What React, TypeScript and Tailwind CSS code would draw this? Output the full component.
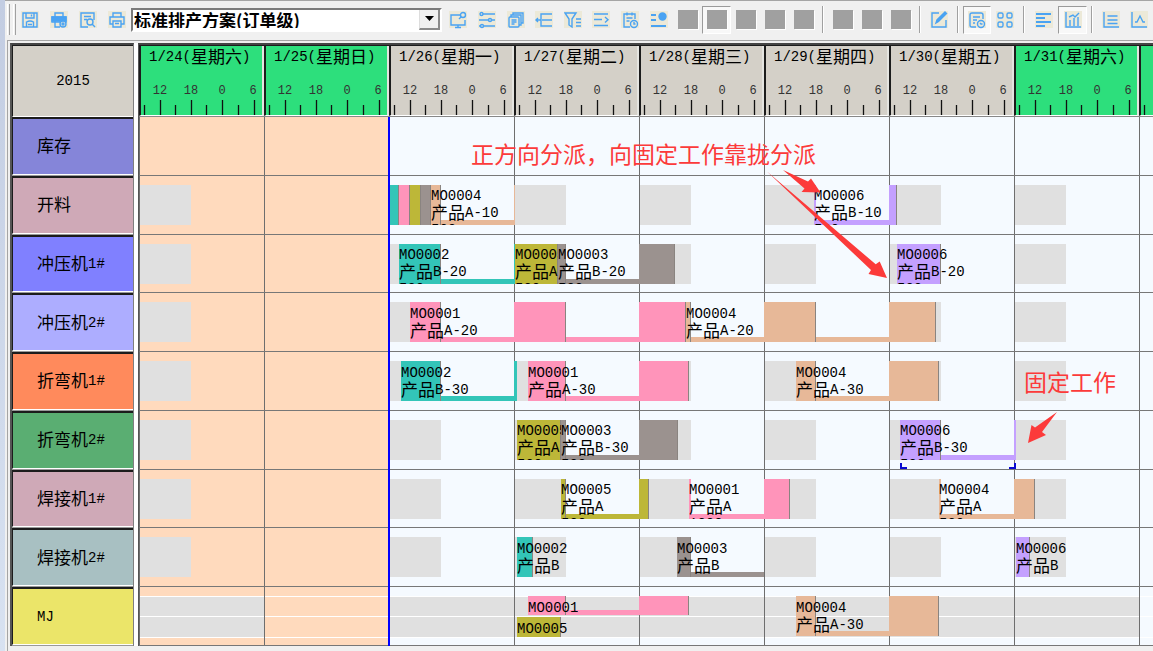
import { type ReactNode } from 'react'

const MONO = "font-['Liberation_Mono','Noto_Sans_CJK_SC',monospace]"
const SANS = "font-['Noto_Sans_CJK_SC',sans-serif]"

const DAY = 125
const WORK_START = 1
const WORK_WIDTH = 51

const days = [
  { label: '1/24(星期六)', off: true },
  { label: '1/25(星期日)', off: true },
  { label: '1/26(星期一)', off: false },
  { label: '1/27(星期二)', off: false },
  { label: '1/28(星期三)', off: false },
  { label: '1/29(星期四)', off: false },
  { label: '1/30(星期五)', off: false },
  { label: '1/31(星期六)', off: true },
  { label: '', off: true },
]

type Job = {
  color: string
  blocks: [number, number][]
  strip?: [number, number]
  lines?: string[]
  clip?: boolean
  top?: number
  height?: number
  fixed?: boolean
}

type Row = { name: string; bg: string; kind: 'plain' | 'work' | 'pool'; jobs: Job[] }

const TEAL = 'bg-[#33c5b8]'
const PINK = 'bg-[#ff94ba]'
const OLIVE = 'bg-[#bdb738]'
const GRAY = 'bg-[#9b928f]'
const PEACH = 'bg-[#e7b898]'
const PURPLE = 'bg-[#c4a0ff]'

const rows: Row[] = [
  { name: '库存', bg: 'bg-[#8585d9]', kind: 'plain', jobs: [] },
  {
    name: '开料', bg: 'bg-[#cfa9b7]', kind: 'work', jobs: [
      { color: TEAL, blocks: [[251, 260]] },
      { color: PINK, blocks: [[260, 271]] },
      { color: OLIVE, blocks: [[271, 282]] },
      { color: GRAY, blocks: [[282, 292]] },
      { color: PEACH, blocks: [[292, 302], [375, 376]], strip: [292, 376], lines: ['MO0004', '产品A-10', '500'] },
      { color: PURPLE, blocks: [[675, 677], [750, 758]], strip: [675, 758], lines: ['MO0006', '产品B-10', '500'] },
    ],
  },
  {
    name: '冲压机1#', bg: 'bg-[#8080ff]', kind: 'work', jobs: [
      { color: TEAL, blocks: [[260, 302], [375, 376]], strip: [260, 376], lines: ['MO0002', '产品B-20', '500'] },
      { color: OLIVE, blocks: [[376, 419]], lines: ['MO0005', '产品A-10', '500'], clip: true },
      { color: GRAY, blocks: [[419, 427], [500, 536]], strip: [419, 536], lines: ['MO0003', '产品B-20', '500'] },
      { color: PURPLE, blocks: [[758, 802]], lines: ['MO0006', '产品B-20', '500'] },
    ],
  },
  {
    name: '冲压机2#', bg: 'bg-[#adadff]', kind: 'work', jobs: [
      { color: PINK, blocks: [[271, 302], [375, 427], [500, 547]], strip: [271, 547], lines: ['MO0001', '产品A-20', '1000'] },
      { color: PEACH, blocks: [[547, 552], [625, 677], [750, 797]], strip: [547, 797], lines: ['MO0004', '产品A-20', '500'] },
    ],
  },
  {
    name: '折弯机1#', bg: 'bg-[#ff8a5c]', kind: 'work', jobs: [
      { color: TEAL, blocks: [[262, 302], [375, 378]], strip: [262, 378], lines: ['MO0002', '产品B-30', '500'] },
      { color: PINK, blocks: [[389, 427], [500, 550]], strip: [389, 550], lines: ['MO0001', '产品A-30', '1000'] },
      { color: PEACH, blocks: [[657, 677], [750, 800]], strip: [657, 800], lines: ['MO0004', '产品A-30', '500'] },
    ],
  },
  {
    name: '折弯机2#', bg: 'bg-[#5aae72]', kind: 'work', jobs: [
      { color: OLIVE, blocks: [[378, 422]], lines: ['MO0005', '产品A-10', '500'], clip: true },
      { color: GRAY, blocks: [[422, 427], [500, 539]], strip: [422, 539], lines: ['MO0003', '产品B-30', '500'] },
      { color: PURPLE, blocks: [[761, 802], [875, 877]], strip: [761, 877], lines: ['MO0006', '产品B-30', '500'], fixed: true },
    ],
  },
  {
    name: '焊接机1#', bg: 'bg-[#cfa9b7]', kind: 'work', jobs: [
      { color: OLIVE, blocks: [[422, 427], [500, 510]], strip: [422, 510], lines: ['MO0005', '产品A', '500'] },
      { color: PINK, blocks: [[550, 552], [625, 651]], strip: [550, 651], lines: ['MO0001', '产品A', '1000'] },
      { color: PEACH, blocks: [[800, 802], [875, 896]], strip: [800, 896], lines: ['MO0004', '产品A', '500'] },
    ],
  },
  {
    name: '焊接机2#', bg: 'bg-[#a8c0c2]', kind: 'work', jobs: [
      { color: TEAL, blocks: [[378, 394]], lines: ['MO0002', '产品B', '500'] },
      { color: GRAY, blocks: [[538, 552]], strip: [538, 625], lines: ['MO0003', '产品B', '500'] },
      { color: PURPLE, blocks: [[877, 891]], lines: ['MO0006', '产品B', '500'] },
    ],
  },
  {
    name: 'MJ', bg: 'bg-[#ebe569]', kind: 'pool', jobs: [
      { color: PINK, blocks: [[389, 427], [500, 550]], strip: [389, 550], lines: ['MO0001'], height: 19 },
      { color: OLIVE, blocks: [[378, 422]], lines: ['MO0005'], top: 30, height: 20 },
      { color: PEACH, blocks: [[657, 677], [750, 800]], strip: [657, 800], lines: ['MO0004', '产品A-30', '500'] },
    ],
  },
]

/** Latin text in the fixed-width face, Chinese characters one size up. */
function Mixed({ text }: { text: string }) {
  const parts = text.split(/([\u4e00-\u9fff]+)/).filter(Boolean)
  return (
    <span className="inline-flex items-center whitespace-nowrap leading-none">
      {parts.map((p, i) =>
        /[\u4e00-\u9fff]/.test(p) ? (
          <span key={i} className="pb-[3px] font-['Noto_Sans_CJK_SC',sans-serif] text-[17px] leading-none">{p}</span>
        ) : (
          <span key={i}>{p}</span>
        ),
      )}
    </span>
  )
}

function JobBar({ job }: { job: Job }) {
  const top = job.top ?? 9
  const height = job.height ?? 40
  const left = job.blocks[0][0]
  return (
    <div className="absolute" style={{ left, top, height }}>
      {job.strip && (
        <div className={`absolute bottom-0 h-[5px] ${job.color}`} style={{ left: 0, width: job.strip[1] - job.strip[0] }} />
      )}
      {job.blocks.map(([a, b]) => (
        <div
          key={a}
          className={`absolute inset-y-0 ${job.color} ${b - a > 3 ? 'border-r border-[#8a8480]' : ''}`}
          style={{ left: a - left, width: b - a }}
        />
      ))}
      {job.lines && (
        <div
          className={`relative h-full overflow-hidden whitespace-nowrap pt-[3px] text-sm text-black ${MONO}`}
          style={job.clip ? { width: job.blocks[0][1] - left } : undefined}
        >
          {job.lines.map((l) => (
            <div key={l} className="flex h-[17px] items-center"><Mixed text={l} /></div>
          ))}
        </div>
      )}
      {job.fixed && job.strip && (
        <div
          className="absolute -bottom-[9px] left-0 flex h-[6px] justify-between"
          style={{ width: job.strip[1] - job.strip[0] }}
        >
          <span className="w-[7px] border-b-2 border-l-2 border-[#0a0ad0]" />
          <span className="w-[7px] border-b-2 border-r-2 border-[#0a0ad0]" />
        </div>
      )}
    </div>
  )
}

function DayHeader({ label, off }: { label: string; off: boolean }) {
  return (
    <div className={`flex w-[125px] shrink-0 flex-col overflow-hidden border-b border-l-2 border-r-2 border-b-white border-l-[#1c1c1c] border-r-[#e4e4e0] ${off ? 'bg-[#2ddf7c]' : 'bg-[#d4d0c8]'}`}>
      <div className={`flex h-[21px] items-center whitespace-nowrap pl-2 text-sm text-black ${MONO}`}>
        <Mixed text={label} />
      </div>
      <div className={`mt-[18px] grid grid-cols-[repeat(4,30px)] gap-x-px text-center text-xs leading-3 text-[#333] ${MONO}`}>
        {[12, 18, 0, 6].map((h) => <span key={h} className="pl-2">{label && h}</span>)}
      </div>
      <svg className="mt-auto h-[15px] w-[121px] shrink-0" viewBox="0 0 121 15" stroke="#111" strokeWidth="1.3" aria-hidden="true">
        <path d="M3.5 5V15M34.5 5V15M65.5 5V15M97.5 5V15M19.5 0V15M50.5 0V15M81.5 0V15M113.5 0V15" />
      </svg>
    </div>
  )
}

function TimelineRow({ row }: { row: Row }) {
  return (
    <div className="relative flex overflow-hidden border-b border-[#777] shadow-[0_1px_0_#7777]">
      {days.map((d, i) => {
        const hasWork = i !== 1 && i !== 8
        return (
          <div
            key={i}
            className={`flex w-[125px] shrink-0 flex-col border-l border-[#6e6e6e] pt-[9px] ${i < 2 ? 'bg-[#ffdabd]' : 'bg-[#f5faff]'}`}
          >
            {row.kind === 'work' && hasWork && (
              <div className="h-10 bg-[#e0e0e0]" style={{ width: WORK_WIDTH }} />
            )}
            {row.kind === 'pool' && (
              <div className={`flex h-[42px] flex-col border-y border-white ${hasWork ? 'bg-[#e0e0e0]' : ''}`}>
                <div className="h-5 border-b border-white" />
              </div>
            )}
          </div>
        )
      })}
      {row.jobs.map((j, i) => <JobBar key={i} job={j} />)}
    </div>
  )
}

const icons: Record<string, ReactNode> = {
  save: <path d="M2 2h14v14H2zM5 2v5h8V2M10.500 3.500v2M5.500 16v-5q3.500-2 7 0v5M7 13.500h4" />,
  printSet: (
    <>
      <path d="M5 6V2h8v4M2 6h14v5H2z" />
      <path d="M2 6h14v4H2z" fill="currentColor" />
      <path d="M5 9v7h5" />
      <circle cx="13" cy="13" r="3" fill="#ece9d8" />
      <circle cx="13" cy="13" r="1" />
    </>
  ),
  preview: <><path d="M9 16H2V2h13v7M5 5.500h7M5 8.500h3" /><circle cx="11" cy="11" r="3" /><path d="m13 13 3 3" /></>,
  print: <path d="M5 6V2h8v4M5 13H2V6h14v7h-3M5 10h8v6H5zM7 12.500h4" />,
  board: <><path d="M11 4H2v10h14V9M6 16.500h6M9 14v2" /><circle cx="14" cy="4" r="2.500" /><path d="m12 6-2 2" /></>,
  sliders: <><path d="M5 3h12M1 9h10M14 9h3M6 15h11M1 15h1" /><circle cx="3.500" cy="3" r="1.500" /><circle cx="12" cy="9" r="1.500" /><circle cx="4" cy="15" r="1.500" /></>,
  copies: <><path d="M6 4V2h10v10h-2M4 6V4h10v10h-2" /><rect x="2" y="6" width="10" height="10" rx="1" /><path d="M4.500 9h5M4.500 11h5M4.500 13h3" /></>,
  tree: <path d="M1 9h5M9 3H6v12h3M9 3h8M7 9h10M9 15h8M3 7 1 9l2 2" />,
  filter: <path d="M1 2h11L8 8v8l-3-2V8zM12 8h5M12 11.500h5M12 15h5" />,
  next: <path d="M2 3h14M2 8.500h8M2 14.500h14M13 6l3 2.700-3 2.800" />,
  clipTime: <><path d="M9 16H3V3h11v5M6 1.500v3M11 1.500v3M5.500 7h6M5.500 10h3" /><circle cx="13" cy="13" r="3.500" /><path d="M13 11v2h1.500" /></>,
  user: <><path d="M1 4h5M1 9h5M1 15h15" strokeWidth="2" /><circle cx="12.500" cy="5.500" r="3.500" fill="currentColor" /></>,
  edit: <><path d="M9 2H2v14h14V9" /><path d="m6 12 1-3 8-8 1.500 1.500-8 8z" fill="currentColor" /></>,
  listTime: <><path d="M8 16H4q-2 0-2-2V4q0-2 2-2h9q2 0 2 2v4M5 6h7M5 9h4M5 12h2" /><circle cx="13" cy="13" r="3.500" /><path d="m12 12 1 1h1.500" /></>,
  modules: <><rect x="2" y="2" width="5" height="5" rx="1.500" /><rect x="11" y="2" width="5" height="5" rx="1.500" /><rect x="2" y="11" width="5" height="5" rx="1.500" /><rect x="11" y="11" width="5" height="5" rx="1.500" /></>,
  align: <path d="M1 3h15M1 7h9M1 11h15M1 15h9" strokeWidth="2" />,
  chart: <path d="M2 1v15h15M6 15V9M10 15V7M14 15V6M5 6l4-2 2 2 4-4" />,
  lines: <path d="M2 1v15h15M5.500 5h10M5.500 9h10M5.500 12.500h10" />,
  curve: <path d="M2 1v15h15M5 11h2l3-6 3 6h2" />,
}

function Tool({ name, label, pressed }: { name: string; label: string; pressed?: boolean }) {
  return (
    <button
      type="button"
      aria-label={label}
      aria-pressed={pressed}
      className={`flex h-7 min-w-0 items-center justify-center ${pressed ? 'border border-b-white border-l-[#9a9a9a] border-r-white border-t-[#9a9a9a] bg-[#f8f8f8]' : ''}`}
    >
      {name === 'blank' ? (
        <span className="h-[19px] w-5 bg-[#a0a0a0] shadow-[1px_1px_0_#fff]" />
      ) : (
        <span className="flex h-[17px] w-[18px] items-center justify-center bg-[#ece9d8] text-[#4aa3f2]">
          <svg className="size-[18px] shrink-0" viewBox="0 0 18 18" fill="none" stroke="currentColor" strokeWidth="1.4" aria-hidden="true">
            {icons[name]}
          </svg>
        </span>
      )}
    </button>
  )
}

function Divider() {
  return <span className="mx-1 h-[27px] w-[2px] shrink-0 border-l border-r border-l-[#a0a0a0] border-r-white" />
}

function Toolbar() {
  return (
    <div className="flex h-10 items-center overflow-hidden border-t border-[#a5a5a5] pb-[2px]">
      <div className="ml-[2px] flex h-[31px] gap-[3px]">
        <span className="w-[3px] border-l border-r border-l-white border-r-[#a0a0a0]" />
        <span className="w-[3px] border-l border-r border-l-white border-r-[#a0a0a0]" />
      </div>
      <div className="grid w-[115px] shrink-0 grid-cols-4 items-center">
        <Tool name="save" label="保存" />
        <Tool name="printSet" label="打印设置" />
        <Tool name="preview" label="预览" />
        <Tool name="print" label="打印" />
      </div>
      <div className="grid h-6 w-[311px] shrink-0 border-2 border-b-white border-l-[#7b7b7b] border-r-white border-t-[#7b7b7b] bg-white">
        <select
          aria-label="排产方案"
          className={`col-start-1 row-start-1 w-full appearance-none bg-white pl-px text-[17px] font-bold leading-none text-black outline-none ${SANS}`}
        >
          <option>标准排产方案(订单级)</option>
        </select>
        <span className="pointer-events-none col-start-1 row-start-1 flex w-[21px] items-center justify-center justify-self-end border-b-2 border-l border-r-2 border-b-[#8a8a8a] border-l-[#ddd] border-r-[#8a8a8a] bg-[#f0f0f0]">
          <svg className="h-[5px] w-[9px]" viewBox="0 0 9 5" aria-hidden="true"><path d="M0 0h9L4.500 5z" /></svg>
        </span>
      </div>
      <div className="ml-[2px] grid w-[229px] shrink-0 grid-cols-8">
        <Tool name="board" label="看板" />
        <Tool name="sliders" label="参数" />
        <Tool name="copies" label="复制" />
        <Tool name="tree" label="层级" />
        <Tool name="filter" label="筛选" />
        <Tool name="next" label="推移" />
        <Tool name="clipTime" label="计划" />
        <Tool name="user" label="人员" />
      </div>
      <div className="grid w-[145px] shrink-0 grid-cols-5">
        <Tool name="blank" label="视图1" />
        <Tool name="blank" label="视图2" pressed />
        <Tool name="blank" label="视图3" />
        <Tool name="blank" label="视图4" />
        <Tool name="blank" label="视图5" />
      </div>
      <Divider />
      <div className="grid w-[87px] shrink-0 grid-cols-3">
        <Tool name="blank" label="视图6" />
        <Tool name="blank" label="视图7" />
        <Tool name="blank" label="视图8" />
      </div>
      <Divider />
      <div className="grid w-7 shrink-0"><Tool name="edit" label="编辑" /></div>
      <Divider />
      <div className="grid w-14 shrink-0 grid-cols-2">
        <Tool name="listTime" label="工作列表" pressed />
        <Tool name="modules" label="模块" />
      </div>
      <Divider />
      <div className="grid w-[58px] shrink-0 grid-cols-2">
        <Tool name="align" label="对齐" />
        <Tool name="chart" label="图表" pressed />
      </div>
      <Divider />
      <div className="grid w-14 shrink-0 grid-cols-2">
        <Tool name="lines" label="负荷" />
        <Tool name="curve" label="曲线" />
      </div>
    </div>
  )
}

function Annotations() {
  return (
    <div className={`pointer-events-none absolute inset-0 text-[23px] leading-none text-[#fc3a3a] ${SANS}`}>
      <p className="absolute left-[332px] top-[25px] whitespace-nowrap">正方向分派，向固定工作靠拢分派</p>
      <p className="absolute left-[885px] top-[253px] whitespace-nowrap">固定工作</p>
      <svg className="absolute left-[620px] top-[50px] h-[280px] w-[320px]" viewBox="759 167 320 280" fill="currentColor" aria-hidden="true">
        <path d="M783 170 808 181.500 811 178.500 820.500 192.500 801.500 192 804.500 188.500Z" />
        <path d="M767 171.500 875.700 264.300 879.700 261.500 887 278 868.500 274 871 270Z" />
        <path d="M1057 412 1042 432 1046 435 1028 443 1031.500 425 1035 427.500Z" />
      </svg>
    </div>
  )
}

export default function App() {
  return (
    <div className="flex min-h-screen overflow-hidden bg-[#f0f0f0]">
      <div className="w-[5px] shrink-0 bg-gradient-to-b from-[#c3cde2] to-[#d8e2f1]" />
      <div className="flex min-w-0 flex-1 flex-col">
        <Toolbar />
        <div className="ml-[2px] flex flex-1 border-l border-t border-[#a5a5a5] pb-[5px] pl-[2px] pt-[2px]">
          <div className="flex w-[124px] shrink-0 flex-col border-l-2 border-r border-t-2 border-l-[#555] border-r-[#7f7f7f] border-t-[#444]">
            <div className={`flex h-[72px] items-center justify-center border-b border-l border-t border-b-white border-l-[#1c1c1c] border-t-[#1c1c1c] bg-[#d4d0c8] text-sm text-black ${MONO}`}>
              2015
            </div>
            <div className="grid flex-1 auto-rows-[minmax(58px,1fr)]">
              {rows.map((r) => (
                <div key={r.name} className="flex border-b border-[#999]">
                  <div className={`flex flex-1 items-center border-b border-l border-t-2 border-b-white border-l-[#1c1c1c] border-t-[#1c1c1c] pl-6 text-sm leading-none text-black ${MONO} ${r.bg}`}>
                    <Mixed text={r.name} />
                  </div>
                </div>
              ))}
            </div>
          </div>
          <div className="w-1 shrink-0 bg-white" />
          <div className="flex min-w-0 flex-1 flex-col overflow-hidden border-l border-t-2 border-l-[#555] border-t-[#444]">
            <div className="flex h-[72px] border-b border-t border-b-[#888] border-t-[#1c1c1c]">
              {days.map((d, i) => <DayHeader key={i} {...d} />)}
            </div>
            <div className="relative grid flex-1 auto-rows-[minmax(58px,1fr)]">
              {rows.map((r) => <TimelineRow key={r.name} row={r} />)}
              <div className="absolute inset-y-0 w-[2px] bg-[#0000ff]" style={{ left: 2 * DAY - WORK_START }} />
              <Annotations />
            </div>
          </div>
        </div>
      </div>
    </div>
  )
}
